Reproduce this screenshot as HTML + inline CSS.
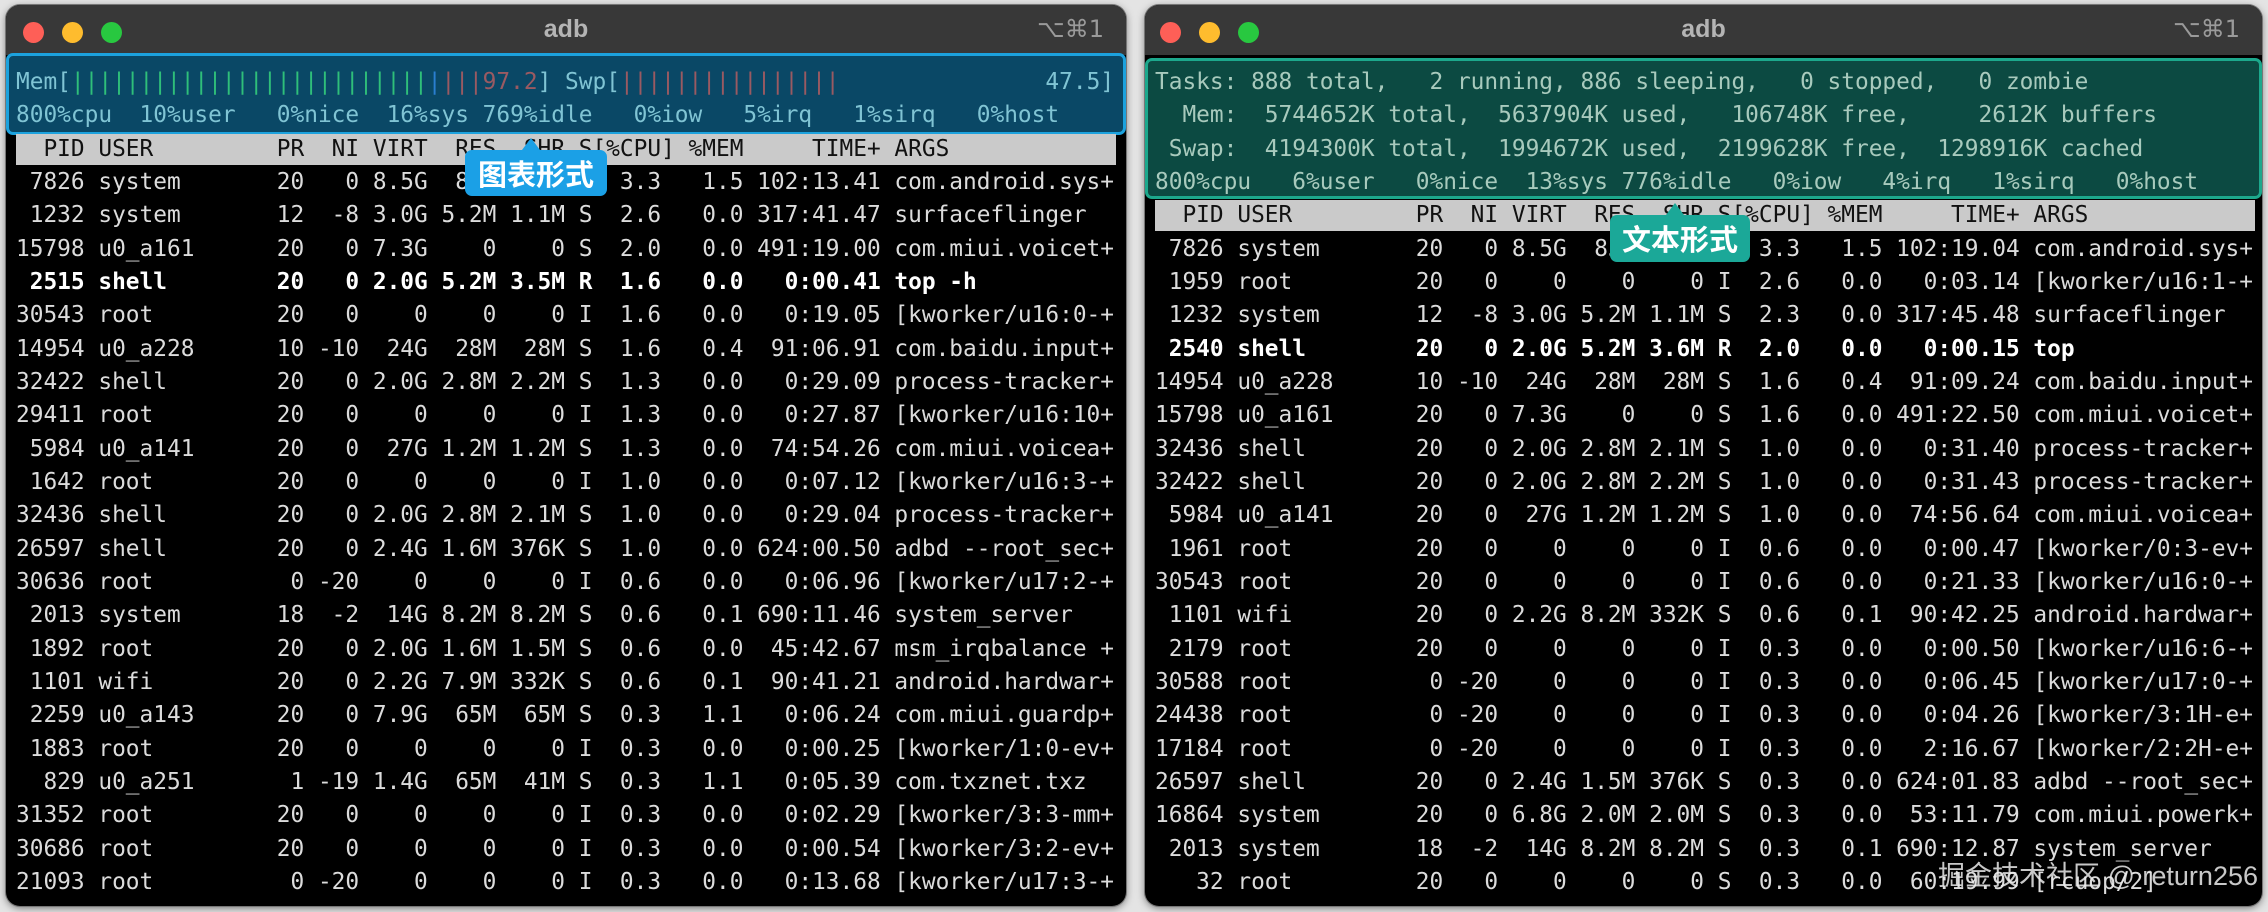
<!DOCTYPE html>
<html><head><meta charset="utf-8"><style>
*{margin:0;padding:0;box-sizing:border-box}
body{width:2268px;height:912px;background:#e4e4e4;position:relative;overflow:hidden;font-family:"DejaVu Sans Mono","Liberation Mono",monospace}
.win{position:absolute;top:5px;height:901px;background:#000;border-radius:14px;overflow:hidden;box-shadow:0 0 0 1px #777,0 2px 8px rgba(0,0,0,.5)}
.tb{position:absolute;left:0;right:0;top:0;height:50px;background:#383838}
.dot{position:absolute;top:17px;width:21px;height:21px;border-radius:50%}
.title{position:absolute;left:0;right:0;top:10px;text-align:center;font:bold 25px "Liberation Sans",sans-serif;color:#b4b4b4}
.kb{position:absolute;top:10px;right:22px;font:24px "DejaVu Sans",sans-serif;color:#9a9a9a}
pre{position:absolute;font-family:"DejaVu Sans Mono",monospace;font-size:22.8px;line-height:33.33px;color:#dcdcdc;white-space:pre}
.hd{background:#cacaca;color:#111;display:inline-block;width:1100px;height:31px;line-height:31px}
.b{font-weight:bold;color:#fff}
.box{position:absolute;border-radius:7px}
.lab{position:absolute;border-radius:7px;color:#fff;font:bold 29px "Noto Sans CJK SC",sans-serif;text-align:center;line-height:46px}
.tri{position:absolute;width:0;height:0;border-left:9px solid transparent;border-right:9px solid transparent}
</style></head><body>

<div class="win" style="left:6px;width:1120px">
 <div class="tb"></div>
 <div class="dot" style="left:17px;background:#fe5f57"></div>
 <div class="dot" style="left:56px;background:#febc2e"></div>
 <div class="dot" style="left:95px;background:#28c840"></div>
 <div class="title">adb</div>
 <div class="kb">⌥⌘1</div>
 <div class="box" style="left:0;top:48px;width:1120px;height:82px;background:#0a4866;border:3px solid #1ca2de"></div>
 <pre style="left:10px;top:61px"><span style="color:#80c4d4">Mem[</span><span style="color:#2fbf7a">||||||||||||||||||||||||||</span><span style="color:#2a7fd0">|</span><span style="color:#9a5a62">|||97.2</span><span style="color:#80c4d4">] Swp[</span><span style="color:#9a5a62">||||||||||||||||</span><span style="color:#80c4d4">               47.5]</span>
<span style="color:#80c4d4">800%cpu  10%user   0%nice  16%sys 769%idle   0%iow   5%irq   1%sirq   0%host</span>
<span class="hd">  PID USER         PR  NI VIRT  RES  SHR S[%CPU] %MEM     TIME+ ARGS</span>
 7826 system       20   0 8.5G  85M  65M S  3.3   1.5 102:13.41 com.android.sys+
 1232 system       12  -8 3.0G 5.2M 1.1M S  2.6   0.0 317:41.47 surfaceflinger
15798 u0_a161      20   0 7.3G    0    0 S  2.0   0.0 491:19.00 com.miui.voicet+
<span class="b"> 2515 shell        20   0 2.0G 5.2M 3.5M R  1.6   0.0   0:00.41 top -h</span>
30543 root         20   0    0    0    0 I  1.6   0.0   0:19.05 [kworker/u16:0-+
14954 u0_a228      10 -10  24G  28M  28M S  1.6   0.4  91:06.91 com.baidu.input+
32422 shell        20   0 2.0G 2.8M 2.2M S  1.3   0.0   0:29.09 process-tracker+
29411 root         20   0    0    0    0 I  1.3   0.0   0:27.87 [kworker/u16:10+
 5984 u0_a141      20   0  27G 1.2M 1.2M S  1.3   0.0  74:54.26 com.miui.voicea+
 1642 root         20   0    0    0    0 I  1.0   0.0   0:07.12 [kworker/u16:3-+
32436 shell        20   0 2.0G 2.8M 2.1M S  1.0   0.0   0:29.04 process-tracker+
26597 shell        20   0 2.4G 1.6M 376K S  1.0   0.0 624:00.50 adbd --root_sec+
30636 root          0 -20    0    0    0 I  0.6   0.0   0:06.96 [kworker/u17:2-+
 2013 system       18  -2  14G 8.2M 8.2M S  0.6   0.1 690:11.46 system_server
 1892 root         20   0 2.0G 1.6M 1.5M S  0.6   0.0  45:42.67 msm_irqbalance +
 1101 wifi         20   0 2.2G 7.9M 332K S  0.6   0.1  90:41.21 android.hardwar+
 2259 u0_a143      20   0 7.9G  65M  65M S  0.3   1.1   0:06.24 com.miui.guardp+
 1883 root         20   0    0    0    0 I  0.3   0.0   0:00.25 [kworker/1:0-ev+
  829 u0_a251       1 -19 1.4G  65M  41M S  0.3   1.1   0:05.39 com.txznet.txz
31352 root         20   0    0    0    0 I  0.3   0.0   0:02.29 [kworker/3:3-mm+
30686 root         20   0    0    0    0 I  0.3   0.0   0:00.54 [kworker/3:2-ev+
21093 root          0 -20    0    0    0 I  0.3   0.0   0:13.68 [kworker/u17:3-+</pre>
 <div class="tri" style="left:516px;top:133px;border-bottom:12px solid #1ba0e6"></div>
 <div class="lab" style="left:459px;top:145px;width:142px;height:46px;background:#1ba0e6">图表形式</div>
</div>

<div class="win" style="left:1145px;width:1117px">
 <div class="tb"></div>
 <div class="dot" style="left:15px;background:#fe5f57"></div>
 <div class="dot" style="left:54px;background:#febc2e"></div>
 <div class="dot" style="left:93px;background:#28c840"></div>
 <div class="title">adb</div>
 <div class="kb">⌥⌘1</div>
 <div class="box" style="left:0;top:53px;width:1117px;height:141px;background:#0c4a42;border:3px solid #1ca88c"></div>
 <pre style="left:10px;top:61px"><span style="color:#a8cabd">Tasks: 888 total,   2 running, 886 sleeping,   0 stopped,   0 zombie
  Mem:  5744652K total,  5637904K used,   106748K free,     2612K buffers
 Swap:  4194300K total,  1994672K used,  2199628K free,  1298916K cached
800%cpu   6%user   0%nice  13%sys 776%idle   0%iow   4%irq   1%sirq   0%host</span>
<span class="hd">  PID USER         PR  NI VIRT  RES  SHR S[%CPU] %MEM     TIME+ ARGS</span>
 7826 system       20   0 8.5G  85M  65M S  3.3   1.5 102:19.04 com.android.sys+
 1959 root         20   0    0    0    0 I  2.6   0.0   0:03.14 [kworker/u16:1-+
 1232 system       12  -8 3.0G 5.2M 1.1M S  2.3   0.0 317:45.48 surfaceflinger
<span class="b"> 2540 shell        20   0 2.0G 5.2M 3.6M R  2.0   0.0   0:00.15 top</span>
14954 u0_a228      10 -10  24G  28M  28M S  1.6   0.4  91:09.24 com.baidu.input+
15798 u0_a161      20   0 7.3G    0    0 S  1.6   0.0 491:22.50 com.miui.voicet+
32436 shell        20   0 2.0G 2.8M 2.1M S  1.0   0.0   0:31.40 process-tracker+
32422 shell        20   0 2.0G 2.8M 2.2M S  1.0   0.0   0:31.43 process-tracker+
 5984 u0_a141      20   0  27G 1.2M 1.2M S  1.0   0.0  74:56.64 com.miui.voicea+
 1961 root         20   0    0    0    0 I  0.6   0.0   0:00.47 [kworker/0:3-ev+
30543 root         20   0    0    0    0 I  0.6   0.0   0:21.33 [kworker/u16:0-+
 1101 wifi         20   0 2.2G 8.2M 332K S  0.6   0.1  90:42.25 android.hardwar+
 2179 root         20   0    0    0    0 I  0.3   0.0   0:00.50 [kworker/u16:6-+
30588 root          0 -20    0    0    0 I  0.3   0.0   0:06.45 [kworker/u17:0-+
24438 root          0 -20    0    0    0 I  0.3   0.0   0:04.26 [kworker/3:1H-e+
17184 root          0 -20    0    0    0 I  0.3   0.0   2:16.67 [kworker/2:2H-e+
26597 shell        20   0 2.4G 1.5M 376K S  0.3   0.0 624:01.83 adbd --root_sec+
16864 system       20   0 6.8G 2.0M 2.0M S  0.3   0.0  53:11.79 com.miui.powerk+
 2013 system       18  -2  14G 8.2M 8.2M S  0.3   0.1 690:12.87 system_server
   32 root         20   0    0    0    0 S  0.3   0.0  60:19.99 [rcuop/2]</pre>
 <div class="tri" style="left:521px;top:198px;border-bottom:12px solid #1ba898"></div>
 <div class="lab" style="left:465px;top:210px;width:140px;height:47px;background:#1ba898">文本形式</div>
 <div style="position:absolute;left:793px;top:849px;font:27px 'Liberation Sans','Noto Sans CJK SC',sans-serif;color:rgba(235,235,235,.85);white-space:nowrap">掘金技术社区 @ return256</div>
</div>
</body></html>
